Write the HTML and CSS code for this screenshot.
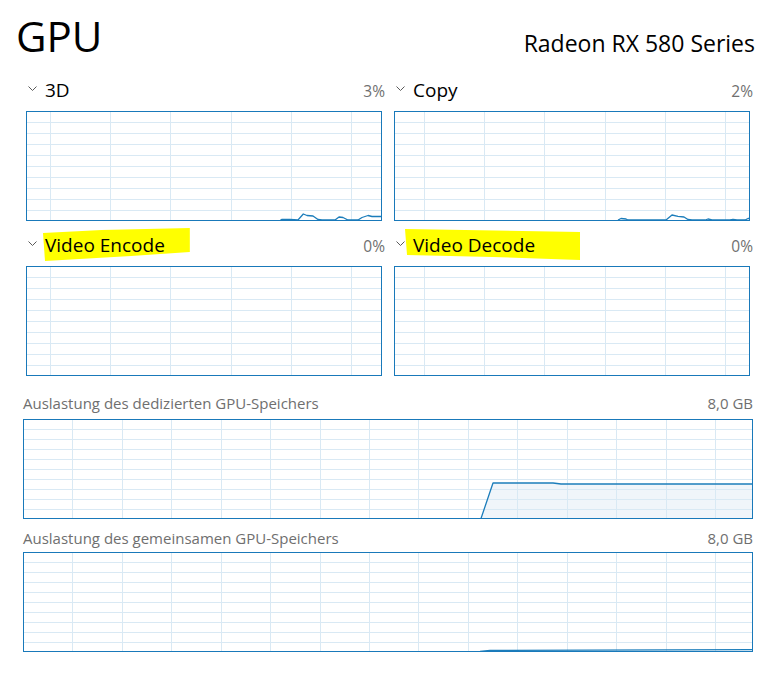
FILE: index.html
```html
<!DOCTYPE html>
<html lang="de">
<head>
<meta charset="utf-8">
<title>GPU</title>
<link rel="stylesheet" href="styles.css">
</head>
<body>
<div class="page">
  <header class="top">
    <h1 class="title">GPU</h1>
    <div class="model">Radeon RX 580 Series</div>
  </header>

  <section class="engines">
    <div class="panel">
      <div class="phead">
        <svg class="chev" width="9" height="5" viewBox="0 0 9 5"><polyline points="0.5,0.5 4.5,4.5 8.5,0.5"/></svg>
        <span class="pname">3D</span>
        <span class="pval">3%</span>
      </div>
      <div class="chart">
        <svg viewBox="0 0 354 108" preserveAspectRatio="none">
          <path class="grid" d="M0 10.5H354M0 21.5H354M0 32.5H354M0 43.5H354M0 54.5H354M0 65.5H354M0 76.5H354M0 87.5H354M0 98.5H354M23.5 0V108M83.5 0V108M143.5 0V108M204.5 0V108M264.5 0V108M324.5 0V108"/>
          <polyline class="line" points="253,108.5 255,107.3 263,107.3 271,108 276.3,102 280,103.5 286,104 291,107.5 295,108 308,108 312,105 316,105.5 321,108 331,108 335,105.5 341,103.5 345,104.5 354,104.5"/>
        </svg>
      </div>
    </div>

    <div class="panel">
      <div class="phead">
        <svg class="chev" width="9" height="5" viewBox="0 0 9 5"><polyline points="0.5,0.5 4.5,4.5 8.5,0.5"/></svg>
        <span class="pname">Copy</span>
        <span class="pval">2%</span>
      </div>
      <div class="chart">
        <svg viewBox="0 0 354 108" preserveAspectRatio="none">
          <path class="grid" d="M0 10.5H354M0 21.5H354M0 32.5H354M0 43.5H354M0 54.5H354M0 65.5H354M0 76.5H354M0 87.5H354M0 98.5H354M29.5 0V108M89.5 0V108M149.5 0V108M210.5 0V108M270.5 0V108M330.5 0V108"/>
          <polyline class="line" points="223,108 226,106.5 231,107 233,108 271,108 277,103 283,104.3 289,105 293,107.5 297,108 310,108 313,107 317,108 335,108 338,107.3 342,108 350,108 353,106.5 354,106.5"/>
        </svg>
      </div>
    </div>

    <div class="panel">
      <div class="phead">
        <svg class="chev" width="9" height="5" viewBox="0 0 9 5"><polyline points="0.5,0.5 4.5,4.5 8.5,0.5"/></svg>
        <span class="pname hl hl-enc">Video Encode</span>
        <span class="pval">0%</span>
      </div>
      <div class="chart">
        <svg viewBox="0 0 354 108" preserveAspectRatio="none">
          <path class="grid" d="M0 10.5H354M0 21.5H354M0 32.5H354M0 43.5H354M0 54.5H354M0 65.5H354M0 76.5H354M0 87.5H354M0 98.5H354M23.5 0V108M83.5 0V108M143.5 0V108M204.5 0V108M264.5 0V108M324.5 0V108"/>
        </svg>
      </div>
    </div>

    <div class="panel">
      <div class="phead">
        <svg class="chev" width="9" height="5" viewBox="0 0 9 5"><polyline points="0.5,0.5 4.5,4.5 8.5,0.5"/></svg>
        <span class="pname hl hl-dec">Video Decode</span>
        <span class="pval">0%</span>
      </div>
      <div class="chart">
        <svg viewBox="0 0 354 108" preserveAspectRatio="none">
          <path class="grid" d="M0 10.5H354M0 21.5H354M0 32.5H354M0 43.5H354M0 54.5H354M0 65.5H354M0 76.5H354M0 87.5H354M0 98.5H354M29.5 0V108M89.5 0V108M149.5 0V108M210.5 0V108M270.5 0V108M330.5 0V108"/>
        </svg>
      </div>
    </div>
  </section>

  <section class="mem mem-first">
    <div class="mhead">
      <span>Auslastung des dedizierten GPU-Speichers</span>
      <span>8,0 GB</span>
    </div>
    <div class="chart mchart">
      <svg viewBox="0 0 728 98" preserveAspectRatio="none">
        <polygon class="fill" points="457,98 469,63 529,63 537,64 728,64 728,98"/>
        <path class="grid" d="M0 9.5H728M0 19.5H728M0 29.5H728M0 39.5H728M0 49.5H728M0 59.5H728M0 69.5H728M0 79.5H728M0 89.5H728M48.5 0V98M98.5 0V98M147.5 0V98M197.5 0V98M246.5 0V98M296.5 0V98M345.5 0V98M394.5 0V98M444.5 0V98M493.5 0V98M543.5 0V98M592.5 0V98M642.5 0V98M691.5 0V98"/>
        <polyline class="line" points="457,98.5 469,63 529,63 537,64 728,64"/>
      </svg>
    </div>
  </section>

  <section class="mem">
    <div class="mhead">
      <span>Auslastung des gemeinsamen GPU-Speichers</span>
      <span>8,0 GB</span>
    </div>
    <div class="chart mchart">
      <svg viewBox="0 0 728 98" preserveAspectRatio="none">
        <path class="grid" d="M0 9.5H728M0 19.5H728M0 29.5H728M0 39.5H728M0 49.5H728M0 59.5H728M0 69.5H728M0 79.5H728M0 89.5H728M48.5 0V98M98.5 0V98M147.5 0V98M197.5 0V98M246.5 0V98M296.5 0V98M345.5 0V98M394.5 0V98M444.5 0V98M493.5 0V98M543.5 0V98M592.5 0V98M642.5 0V98M691.5 0V98"/>
        <polyline class="line" points="456,98.5 466,97.4 728,96.6"/>
      </svg>
    </div>
  </section>
</div>
</body>
</html>
```

FILE: styles.css
```css
* { box-sizing: border-box; }

html, body {
  margin: 0;
  padding: 0;
  background: #ffffff;
}

body {
  font-family: "Open Sans", "Noto Sans", "Liberation Sans", sans-serif;
  color: #000;
  width: 774px;
  height: 674px;
  overflow: hidden;
}

.page {
  padding: 0 21px 0 23px;
}

/* header */
.top {
  display: flex;
  justify-content: space-between;
  align-items: baseline;
  height: 78px;
  padding-top: 15px;
}

.title {
  margin: 0 0 0 -7px;
  font-size: 42px;
  font-weight: 400;
  line-height: 42px;
}

.model {
  font-size: 23px;
  margin-right: -2px;
}

/* engine panels */
.engines {
  display: grid;
  grid-template-columns: 359px 359px;
  column-gap: 9px;
  row-gap: 12px;
  margin-left: 3px;
}

.phead {
  display: flex;
  align-items: baseline;
  height: 24px;
  line-height: 24px;
}

.chev {
  align-self: flex-start;
  margin: 8px 8px 0 2px;
  flex: none;
}

.chev polyline {
  fill: none;
  stroke: #5a5a5a;
  stroke-width: 1;
}

.pname {
  font-size: 19px;
  position: relative;
  z-index: 0;
}

.pval {
  margin-left: auto;
  font-size: 15.5px;
  color: #707070;
}

.chart {
  margin-top: 9px;
  margin-right: 3px;
  height: 110px;
  border: 1px solid #1979ba;
}

.chart svg {
  display: block;
  width: 100%;
  height: 100%;
}

.grid {
  fill: none;
  stroke: #d9e9f4;
  stroke-width: 1;
  shape-rendering: crispEdges;
}

.line {
  fill: none;
  stroke: #1b7dbb;
  stroke-width: 1.3;
  stroke-linejoin: round;
}

.fill {
  fill: #f0f5fa;
}

/* yellow marker highlight */
.hl::before {
  content: "";
  position: absolute;
  z-index: -1;
  background: #ffff00;
}

.hl-enc::before {
  top: -5px;
  bottom: -4px;
  left: -2px;
  right: -25px;
  clip-path: polygon(0 5px, 40% 2px, 100% 0, 100% 24px, 60% 28px, 2px 100%);
}

.hl-dec::before {
  top: -4px;
  bottom: -3px;
  left: -8px;
  right: -45px;
  clip-path: polygon(0 0, 100% 3px, 100% 100%, 50% 28px, 2px 26px);
}

/* memory charts */
.mem {
  margin-top: 10px;
}

.mem-first {
  margin-top: 18px;
}

.mhead {
  display: flex;
  justify-content: space-between;
  font-size: 15px;
  line-height: 18px;
  color: #6f6f6f;
}

.mchart {
  margin-top: 7px;
  margin-right: 0;
  height: 100px;
}

.mem:last-child .mchart {
  margin-top: 5px;
}
```
